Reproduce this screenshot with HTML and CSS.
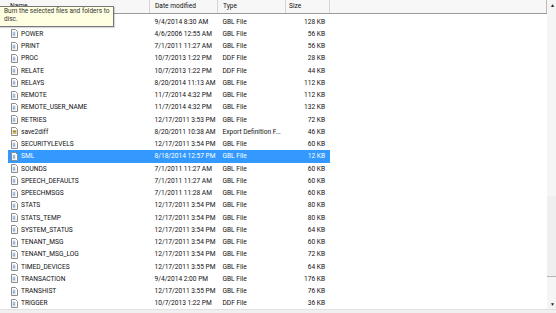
FILE: index.html
```html
<!DOCTYPE html>
<html lang="en">
<head>
    <meta charset="UTF-8">
    <title>Files</title>
    <link rel="stylesheet" href="styles.css">
</head>
<body>
    <svg width="0" height="0" class="defs">
        <symbol id="doc" viewBox="0 0 7 9">
            <path d="M0.5 0.5h4l2 2v6h-6z" fill="#fff" stroke="#8c8c8c"/>
            <path d="M1.5 2.5h3v5h-3z" fill="#c9d6e6"/>
            <path d="M2 4h2M2 5.5h2" stroke="#6e8cb0" stroke-width="0.6"/>
        </symbol>
        <symbol id="exp" viewBox="0 0 7 9">
            <path d="M0.5 0.5h4l2 2v6h-6z" fill="#fff" stroke="#8c8c8c"/>
            <path d="M1.5 3h4v4h-4z" fill="#d9b85a"/>
            <path d="M2 4.5h3" stroke="#4f79b6" stroke-width="0.8"/>
        </symbol>
    </svg>

    <div class="window">
        <div class="list">
            <div class="header">
                <div class="hcell name-h">Name</div>
                <div class="hcell">Date modified</div>
                <div class="hcell">Type</div>
                <div class="hcell">Size</div>
                <div class="hcell filler"></div>
            </div>
            <div class="rows">
                <div class="row"><span class="name"><svg class="icon"><use href="#doc"/></svg>PHONE</span><span>9/4/2014 8:30 AM</span><span>GBL File</span><span class="size">128 KB</span></div>
                <div class="row"><span class="name"><svg class="icon"><use href="#doc"/></svg>POWER</span><span>4/6/2006 12:55 AM</span><span>GBL File</span><span class="size">56 KB</span></div>
                <div class="row"><span class="name"><svg class="icon"><use href="#doc"/></svg>PRINT</span><span>7/1/2011 11:27 AM</span><span>GBL File</span><span class="size">56 KB</span></div>
                <div class="row"><span class="name"><svg class="icon"><use href="#doc"/></svg>PROC</span><span>10/7/2013 1:22 PM</span><span>DDF File</span><span class="size">28 KB</span></div>
                <div class="row"><span class="name"><svg class="icon"><use href="#doc"/></svg>RELATE</span><span>10/7/2013 1:22 PM</span><span>DDF File</span><span class="size">44 KB</span></div>
                <div class="row"><span class="name"><svg class="icon"><use href="#doc"/></svg>RELAYS</span><span>8/20/2014 11:13 AM</span><span>GBL File</span><span class="size">112 KB</span></div>
                <div class="row"><span class="name"><svg class="icon"><use href="#doc"/></svg>REMOTE</span><span>11/7/2014 4:32 PM</span><span>GBL File</span><span class="size">112 KB</span></div>
                <div class="row"><span class="name"><svg class="icon"><use href="#doc"/></svg>REMOTE_USER_NAME</span><span>11/7/2014 4:32 PM</span><span>GBL File</span><span class="size">132 KB</span></div>
                <div class="row"><span class="name"><svg class="icon"><use href="#doc"/></svg>RETRIES</span><span>12/17/2011 3:53 PM</span><span>GBL File</span><span class="size">72 KB</span></div>
                <div class="row"><span class="name"><svg class="icon"><use href="#exp"/></svg>save2diff</span><span>8/20/2011 10:38 AM</span><span>Export Definition F...</span><span class="size">46 KB</span></div>
                <div class="row"><span class="name"><svg class="icon"><use href="#doc"/></svg>SECURITYLEVELS</span><span>12/17/2011 3:54 PM</span><span>GBL File</span><span class="size">60 KB</span></div>
                <div class="row selected"><span class="name"><svg class="icon"><use href="#doc"/></svg>SML</span><span>8/18/2014 12:57 PM</span><span>GBL File</span><span class="size">12 KB</span></div>
                <div class="row"><span class="name"><svg class="icon"><use href="#doc"/></svg>SOUNDS</span><span>7/1/2011 11:27 AM</span><span>GBL File</span><span class="size">60 KB</span></div>
                <div class="row"><span class="name"><svg class="icon"><use href="#doc"/></svg>SPEECH_DEFAULTS</span><span>7/1/2011 11:27 AM</span><span>GBL File</span><span class="size">60 KB</span></div>
                <div class="row"><span class="name"><svg class="icon"><use href="#doc"/></svg>SPEECHMSGS</span><span>7/1/2011 11:28 AM</span><span>GBL File</span><span class="size">60 KB</span></div>
                <div class="row"><span class="name"><svg class="icon"><use href="#doc"/></svg>STATS</span><span>12/17/2011 3:54 PM</span><span>GBL File</span><span class="size">80 KB</span></div>
                <div class="row"><span class="name"><svg class="icon"><use href="#doc"/></svg>STATS_TEMP</span><span>12/17/2011 3:54 PM</span><span>GBL File</span><span class="size">80 KB</span></div>
                <div class="row"><span class="name"><svg class="icon"><use href="#doc"/></svg>SYSTEM_STATUS</span><span>12/17/2011 3:54 PM</span><span>GBL File</span><span class="size">64 KB</span></div>
                <div class="row"><span class="name"><svg class="icon"><use href="#doc"/></svg>TENANT_MSG</span><span>12/17/2011 3:54 PM</span><span>GBL File</span><span class="size">60 KB</span></div>
                <div class="row"><span class="name"><svg class="icon"><use href="#doc"/></svg>TENANT_MSG_LOG</span><span>12/17/2011 3:54 PM</span><span>GBL File</span><span class="size">72 KB</span></div>
                <div class="row"><span class="name"><svg class="icon"><use href="#doc"/></svg>TIMED_DEVICES</span><span>12/17/2011 3:55 PM</span><span>GBL File</span><span class="size">64 KB</span></div>
                <div class="row"><span class="name"><svg class="icon"><use href="#doc"/></svg>TRANSACTION</span><span>9/4/2014 2:00 PM</span><span>GBL File</span><span class="size">176 KB</span></div>
                <div class="row"><span class="name"><svg class="icon"><use href="#doc"/></svg>TRANSHIST</span><span>12/17/2011 3:55 PM</span><span>GBL File</span><span class="size">76 KB</span></div>
                <div class="row"><span class="name"><svg class="icon"><use href="#doc"/></svg>TRIGGER</span><span>10/7/2013 1:22 PM</span><span>DDF File</span><span class="size">36 KB</span></div>
            </div>
        </div>
        <div class="vscroll">
            <div class="arrow">▲</div>
            <div class="track"></div>
            <div class="thumb"></div>
            <div class="arrow">▼</div>
        </div>
    </div>
    <div class="hscroll"></div>

    <div class="tooltip">Burn the selected files and folders to disc.</div>
</body>
</html>
```

FILE: styles.css
```css
body {
    margin: 0;
    font-family: Roboto, "Liberation Sans", sans-serif;
    font-size: 6.6px;
    color: #111;
    background: #fff;
    width: 556px;
    height: 313px;
    overflow: hidden;
    position: relative;
}
.defs {
    position: absolute;
}
.window {
    display: flex;
    height: 309px;
}
.list {
    flex: 1;
    overflow: hidden;
}
.header {
    display: flex;
    height: 14px;
    background: #f7f7f7;
    border-bottom: 1px solid #9a9a9a;
    box-sizing: border-box;
}
.hcell {
    border-right: 1px solid #d6d6d6;
    line-height: 13px;
    padding-left: 5px;
    box-sizing: border-box;
}
.hcell:nth-child(1) { width: 150px; padding-left: 10px; }
.hcell:nth-child(2) { width: 68px; }
.hcell:nth-child(3) { width: 68px; }
.hcell:nth-child(4) { width: 44px; padding-left: 3px; }
.hcell.filler { flex: 1; border-right: 1px solid #bcbcbc; }
.rows {
    padding-top: 1.5px;
}
.row {
    display: grid;
    grid-template-columns: 142px 68px 68px 44px;
    height: 12.25px;
    align-items: center;
    margin-left: 8px;
    width: 322px;
    white-space: nowrap;
}
.row span {
    padding-left: 4.5px;
    overflow: hidden;
}
.row .name {
    display: flex;
    align-items: center;
    padding-left: 3px;
}
.row .size {
    text-align: right;
    padding-right: 5px;
}
.icon {
    width: 7px;
    height: 9px;
    margin-right: 3px;
    flex: none;
}
.row.selected {
    background: #3399ff;
    color: #fff;
}
.vscroll {
    width: 9px;
    display: flex;
    flex-direction: column;
    background: #f5f5f5;
}
.arrow {
    height: 10px;
    font-size: 5px;
    line-height: 10px;
    text-align: center;
    padding-left: 2px;
    color: #222;
}
.track {
    flex: 1;
}
.thumb {
    height: 80px;
    background: #efefef;
    border-bottom: 1px solid #b5b5b5;
    margin-bottom: 22px;
}
.hscroll {
    height: 4px;
    background: #f0f0f0;
    border-top: 1px solid #e2e2e2;
}
.tooltip {
    position: absolute;
    left: -1px;
    top: 6px;
    width: 106px;
    height: 18px;
    padding: 1px 3px 0 4px;
    background: #ffffe1;
    border: 1px solid #767676;
    color: #333;
    font-size: 6.5px;
    line-height: 7.6px;
    box-shadow: 1px 1px 1px rgba(0, 0, 0, 0.15);
}
```
